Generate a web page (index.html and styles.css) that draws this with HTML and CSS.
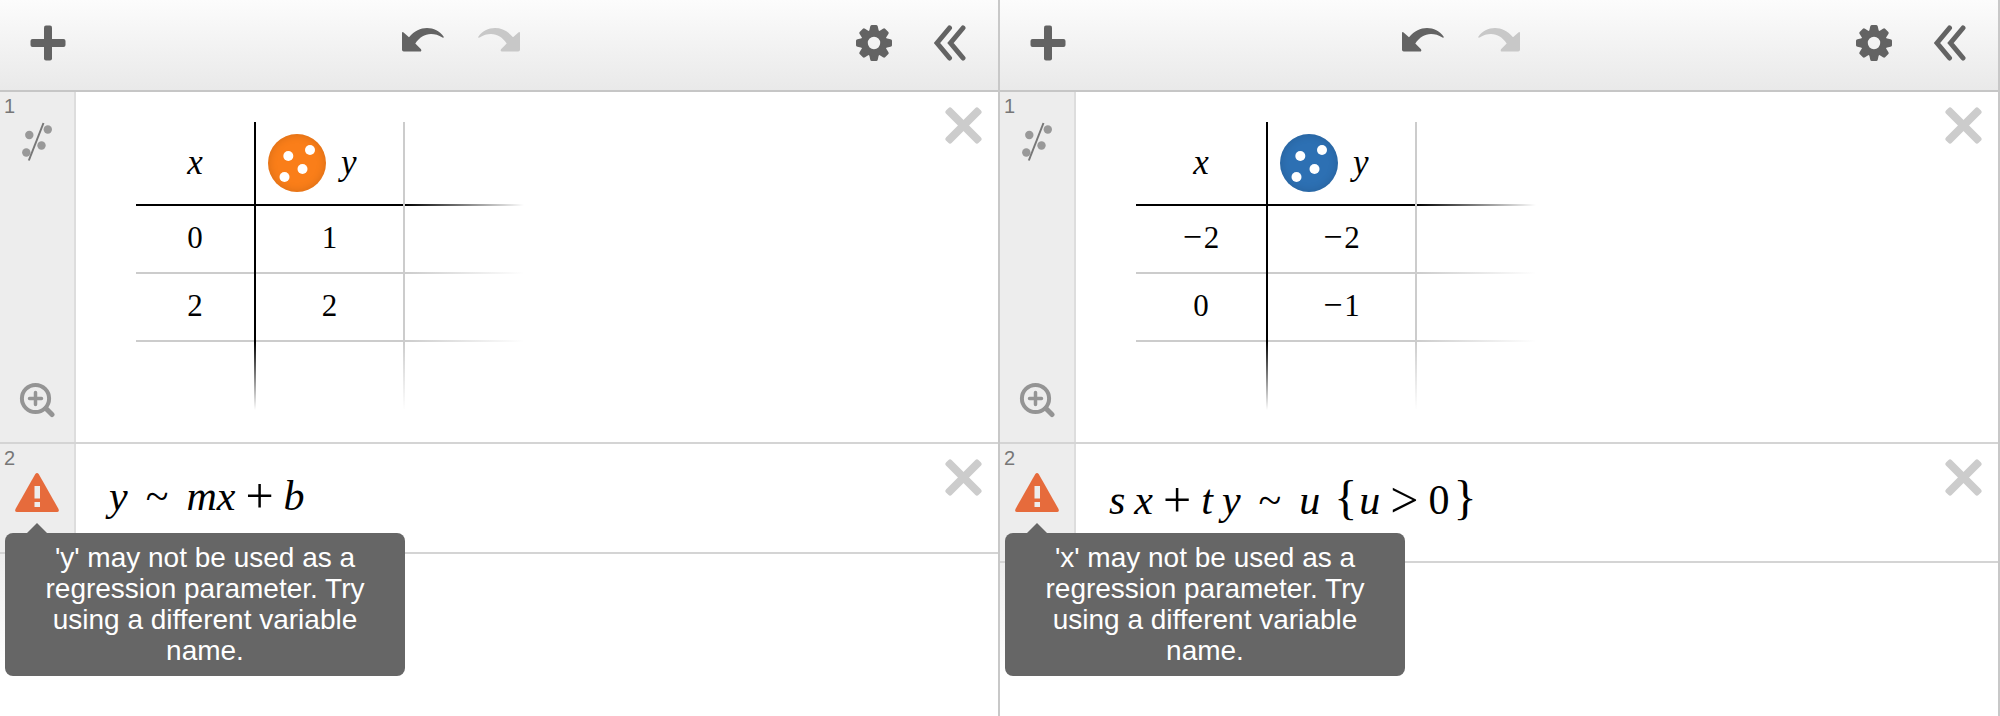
FILE: index.html
```html
<!DOCTYPE html>
<html lang="en">
<head>
<meta charset="utf-8">
<title>Regression expressions</title>
<link rel="stylesheet" href="styles.css">
</head>
<body>
<svg class="sprite" aria-hidden="true">
  <symbol id="i-plus" viewBox="0 0 36 36"><g fill="currentColor"><rect x="14" y=".5" width="8" height="35" rx="2"/><rect x=".5" y="14" width="35" height="8" rx="2"/></g></symbol>
  <symbol id="i-undo" viewBox="0 0 42 24"><path d="M0 5.300Q0 3.200 1.600 4.400L7 9.200C12.500 2.800 18.500 0 25 0C31.500 0 38 3 41.700 8.800C42 9.800 41.300 9.900 40.500 9.500C36.500 7 33 6 29 6C22.500 6 17.500 9.500 13.300 15.500L19 21.200Q20 23.500 18 23.500H1.800Q0 23.500 0 21.700Z" fill="currentColor"/></symbol>
  <symbol id="i-gear" viewBox="-18 -18 36 36">
    <g fill="currentColor"><path id="tooth" d="M-5-11L-3.800-16.500Q-3.500-18-2.300-18H2.300Q3.500-18 3.800-16.500L5-11Z"/>
    <use href="#tooth" transform="rotate(45)"/><use href="#tooth" transform="rotate(90)"/><use href="#tooth" transform="rotate(135)"/><use href="#tooth" transform="rotate(180)"/><use href="#tooth" transform="rotate(225)"/><use href="#tooth" transform="rotate(270)"/><use href="#tooth" transform="rotate(315)"/></g>
    <circle r="9.700" fill="none" stroke="currentColor" stroke-width="7"/>
  </symbol>
  <symbol id="i-chevrons" viewBox="0 0 32 36"><path d="M15.500 3L3 18L15.500 33M29 3L16.500 18L29 33" fill="none" stroke="currentColor" stroke-width="5" stroke-linecap="round" stroke-linejoin="miter"/></symbol>
  <symbol id="i-close" viewBox="-18.500 -18.500 37 37"><g fill="currentColor"><rect x="-23" y="-4" width="46" height="8" rx="2.500" transform="rotate(45)"/><rect x="-23" y="-4" width="46" height="8" rx="2.500" transform="rotate(-45)"/></g></symbol>
  <symbol id="i-regress" viewBox="0 0 32 40"><g fill="#999"><circle cx="8.300" cy="13" r="4.200"/><circle cx="26.800" cy="7.500" r="4.200"/><circle cx="20.500" cy="23.500" r="4.200"/><circle cx="5.300" cy="30.500" r="4.200"/></g><path d="M22.500 1L7.800 38.500" stroke="#777" stroke-width="2"/></symbol>
  <symbol id="i-zoom" viewBox="0 0 36 36"><g fill="none" stroke="currentColor" stroke-width="4"><circle cx="16.500" cy="16.500" r="13.600"/><path d="M27 26.500L33 32.500" stroke-width="5" stroke-linecap="round"/><path d="M16.500 10.500v12M10.500 16.500h12" stroke-width="3.500" stroke-linecap="round"/></g></symbol>
  <symbol id="i-warn" viewBox="0 0 44 39"><path d="M20.300 1Q22-1 23.700 1L43.500 36Q44.500 39 42 39H2Q-.5 39 .5 36Z" fill="#e66b3c"/><path d="M19.500 13h5.500v12.500h-5.500zM19.500 29h5.500v5h-5.500z" fill="#ededed"/></symbol>
  <symbol id="i-dots" viewBox="0 0 58 58"><g fill="#fff"><circle cx="20.300" cy="22" r="5"/><circle cx="42" cy="16" r="5"/><circle cx="34.500" cy="35" r="5"/><circle cx="16.500" cy="43" r="5"/></g></symbol>
</svg>

<main class="panels">
  <section class="panel" aria-label="First expression list">
    <header class="toolbar">
      <div class="group"><button class="tool" aria-label="Add item"><svg class="ico"><use href="#i-plus"/></svg></button></div>
      <div class="group history">
        <button class="tool" aria-label="Undo"><svg class="arrow"><use href="#i-undo"/></svg></button>
        <button class="tool" aria-label="Redo" disabled><svg class="arrow flip"><use href="#i-undo"/></svg></button>
      </div>
      <div class="group end">
        <button class="tool" aria-label="Settings"><svg class="ico"><use href="#i-gear"/></svg></button>
        <button class="tool" aria-label="Hide list"><svg class="chev"><use href="#i-chevrons"/></svg></button>
      </div>
    </header>
    <article class="item">
      <div class="gutter">
        <span class="index">1</span>
        <button class="side" aria-label="Add regression"><svg class="regress"><use href="#i-regress"/></svg></button>
        <button class="side bottom" aria-label="Zoom fit"><svg class="ico"><use href="#i-zoom"/></svg></button>
      </div>
      <div class="body table-body">
        <table class="data">
          <thead><tr><th class="c1"><i>x</i></th><th class="c2"><div class="head"><button class="color orange" aria-label="Point style"><svg class="dots"><use href="#i-dots"/></svg></button><i>y</i></div></th><th class="c3"></th></tr></thead>
          <tbody>
            <tr><td>0</td><td>1</td><td></td></tr>
            <tr><td>2</td><td>2</td><td></td></tr>
            <tr><td></td><td></td><td></td></tr>
          </tbody>
        </table>
      </div>
      <button class="close" aria-label="Delete table"><svg class="x"><use href="#i-close"/></svg></button>
    </article>
    <article class="item">
      <div class="gutter">
        <span class="index">2</span>
        <div class="alert"><svg class="warn"><use href="#i-warn"/></svg>
          <div class="tip" role="tooltip">'y' may not be used as a regression parameter. Try using a different variable name.</div></div>
      </div>
      <div class="body formula" role="math"><i>y</i><span class="tilde">~</span><i>mx</i><span class="op">+</span><i>b</i></div>
      <button class="close" aria-label="Delete expression"><svg class="x"><use href="#i-close"/></svg></button>
    </article>
    <div class="next"></div>
  </section>

  <section class="panel" aria-label="Second expression list">
    <header class="toolbar">
      <div class="group"><button class="tool" aria-label="Add item"><svg class="ico"><use href="#i-plus"/></svg></button></div>
      <div class="group history">
        <button class="tool" aria-label="Undo"><svg class="arrow"><use href="#i-undo"/></svg></button>
        <button class="tool" aria-label="Redo" disabled><svg class="arrow flip"><use href="#i-undo"/></svg></button>
      </div>
      <div class="group end">
        <button class="tool" aria-label="Settings"><svg class="ico"><use href="#i-gear"/></svg></button>
        <button class="tool" aria-label="Hide list"><svg class="chev"><use href="#i-chevrons"/></svg></button>
      </div>
    </header>
    <article class="item">
      <div class="gutter">
        <span class="index">1</span>
        <button class="side" aria-label="Add regression"><svg class="regress"><use href="#i-regress"/></svg></button>
        <button class="side bottom" aria-label="Zoom fit"><svg class="ico"><use href="#i-zoom"/></svg></button>
      </div>
      <div class="body table-body">
        <table class="data wide">
          <thead><tr><th class="c1"><i>x</i></th><th class="c2"><div class="head"><button class="color blue" aria-label="Point style"><svg class="dots"><use href="#i-dots"/></svg></button><i>y</i></div></th><th class="c3"></th></tr></thead>
          <tbody>
            <tr><td><span class="minus">−</span>2</td><td><span class="minus">−</span>2</td><td></td></tr>
            <tr><td>0</td><td><span class="minus">−</span>1</td><td></td></tr>
            <tr><td></td><td></td><td></td></tr>
          </tbody>
        </table>
      </div>
      <button class="close" aria-label="Delete table"><svg class="x"><use href="#i-close"/></svg></button>
    </article>
    <article class="item">
      <div class="gutter">
        <span class="index">2</span>
        <div class="alert"><svg class="warn"><use href="#i-warn"/></svg>
          <div class="tip" role="tooltip">'x' may not be used as a regression parameter. Try using a different variable name.</div></div>
      </div>
      <div class="body formula tall" role="math"><i>s</i><i class="factor">x</i><span class="op">+</span><i>t</i><i class="factor">y</i><span class="tilde">~</span><i>u</i><span class="brace open">{</span><i>u</i><span class="op">&gt;</span><span>0</span><span class="brace">}</span></div>
      <button class="close" aria-label="Delete expression"><svg class="x"><use href="#i-close"/></svg></button>
    </article>
    <div class="next"></div>
  </section>
</main>
</body>
</html>
```
FILE: styles.css
```css
* { box-sizing: border-box; }
body { margin: 0; background: #fff; font-family: "Liberation Sans", Arial, sans-serif; }
button { padding: 0; border: 0; background: none; color: inherit; font: inherit; cursor: pointer; }
svg { display: block; }
.sprite { position: absolute; width: 0; height: 0; }

.panels { display: grid; grid-template-columns: 1fr 1fr; min-height: 100vh; }
.panel { display: flex; flex-direction: column; min-width: 0; border-right: 2px solid #c8c8c8; }

.toolbar {
  display: grid; grid-template-columns: 1fr auto 1fr; align-items: center;
  height: 92px; padding: 0 32px 4px 30px; border-bottom: 2px solid #c6c6c6;
  background: linear-gradient(#fcfcfc, #e9e9e9); color: #636363;
}
.group { display: flex; align-items: center; }
.history { gap: 34px; padding-right: 74px; }
.end { justify-content: flex-end; gap: 42px; }
.tool:disabled { color: #c8c8c8; }
.ico { width: 36px; height: 36px; }
.arrow { width: 42px; height: 24px; margin-bottom: 6px; }
.flip { transform: scaleX(-1); }
.chev { width: 32px; height: 36px; }

.item { position: relative; display: flex; border-bottom: 2px solid #d4d4d4; }
.gutter {
  display: flex; flex: none; flex-direction: column; align-items: center;
  width: 76px; padding-bottom: 24px; border-right: 2px solid #ddd;
  background: #ededed; color: #949494;
}
.index { align-self: flex-start; padding-left: 4px; font-size: 20px; line-height: 28px; color: #777; }
.regress { width: 32px; height: 40px; margin-top: 2px; }
.bottom { margin-top: auto; }
.body { flex: 1; min-width: 0; }
.close { position: absolute; top: 15px; right: 16px; color: #ccc; }
.x { width: 37px; height: 37px; }

.table-body { padding: 30px 60px 32px; }
.data { border-spacing: 0; font: 31px/36px "Liberation Serif", "Times New Roman", serif; text-align: center; }
.data th, .data td {
  height: 68px; padding: 0 2px 4px 0; font-weight: normal;
  background: linear-gradient(#ccc, #ccc) right / 2px 100% no-repeat, linear-gradient(#ccc, #ccc) bottom / 100% 2px no-repeat;
}
.data th {
  height: 84px; padding-bottom: 2px;
  background: linear-gradient(#ccc, #ccc) right / 2px 100% no-repeat, linear-gradient(#000, #000) bottom / 100% 2px no-repeat;
}
.data th:first-child { background: linear-gradient(#000, #000) right / 2px 100% no-repeat, linear-gradient(#000, #000) bottom / 100% 2px no-repeat; }
.data td:first-child { background: linear-gradient(#000, #000) right / 2px 100% no-repeat, linear-gradient(#ccc, #ccc) bottom / 100% 2px no-repeat; }
.data th:last-child { background: linear-gradient(to right, #000, transparent) bottom / 100% 2px no-repeat; }
.data td:last-child { background: linear-gradient(to right, #ccc, transparent) bottom / 100% 2px no-repeat; }
.data tr:last-child td { background: linear-gradient(#ccc, transparent) right / 2px 100% no-repeat; }
.data tbody tr:last-child td:first-child { background: linear-gradient(#000, transparent) right / 2px 100% no-repeat; }
.data tbody tr:last-child td:last-child { background: none; }
.data .c1 { width: 120px; }
.data.wide .c1 { width: 132px; }
.data .c2 { width: 149px; }
.data .c3 { width: 119px; }
.data i { font-size: 35px; }
.head { display: flex; align-items: center; gap: 15px; padding-left: 12px; }
.color { width: 58px; height: 58px; border-radius: 50%; box-shadow: inset 0 0 10px rgba(0, 0, 0, .15); }
.orange { background: #fa7e19; }
.blue { background: #2d70b3; }
.dots { width: 58px; height: 58px; }
.minus { padding-right: 2px; font-size: 34px; line-height: 30px; }

.formula {
  display: flex; align-items: baseline; padding: 28px 60px 32px 33px;
  font: 42px/48px "Liberation Serif", "Times New Roman", serif;
}
.tall { padding-top: 32px; padding-bottom: 37px; }
.tilde { padding: 0 18px; }
.op { align-self: center; padding: 0 10px; font-size: 50px; line-height: 48px; }
.factor { padding-left: 9px; }
.brace { padding-left: 4px; font-size: 48px; line-height: 40px; }
.open { padding: 0 2px 0 14px; }

.alert { position: relative; }
.warn { width: 44px; height: 40px; padding-top: 1px; }
.tip {
  position: absolute; z-index: 2; top: 61px; left: -10px; width: 400px;
  padding: 9px 24px 10px; border-radius: 8px; background: #666; color: #fff;
  font-size: 28px; line-height: 31px; text-align: center;
}
.tip::before {
  content: ""; position: absolute; bottom: 100%; left: 22px;
  border: 10px solid transparent; border-top: 0; border-bottom-color: #666;
}
.next { flex: 1; }
.next::before { content: ""; display: block; width: 76px; height: 110px; background: linear-gradient(#ededed, #fff); }
```
